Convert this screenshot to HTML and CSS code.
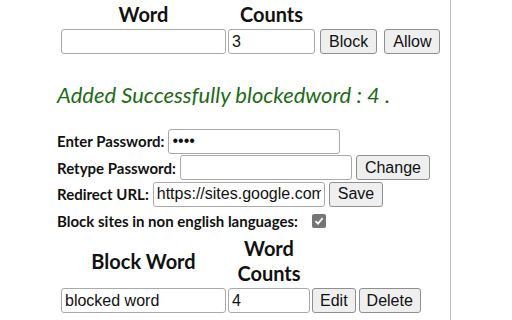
FILE: index.html
```html
<!DOCTYPE html>
<html lang="en">
  <head>
    <meta charset="UTF-8" />
    <meta name="viewport" content="width=device-width, initial-scale=1.0" />
    <title>Block Words</title>
    <link rel="stylesheet" href="styles.css">
  </head>
  <body>
    <div class="page">
      <!-- add / allow a word -->
      <table class="word-table">
        <tr>
          <th>Word</th>
          <th>Counts</th>
          <th></th>
        </tr>
        <tr>
          <td><input type="text" class="word-input" /></td>
          <td><input type="text" class="count-input" value="3" /></td>
          <td>
            <button>Block</button>
            <button>Allow</button>
          </td>
        </tr>
      </table>

      <p class="message">Added Successfully blockedword : 4 .</p>

      <div class="settings">
        <div class="row">
          <label>Enter Password:</label>
          <input type="password" class="field" value="1234" />
        </div>
        <div class="row">
          <label>Retype Password:</label>
          <input type="password" class="field" />
          <button>Change</button>
        </div>
        <div class="row">
          <label>Redirect URL:</label>
          <input type="text" class="field" value="https://sites.google.com/" />
          <button>Save</button>
        </div>
        <div class="row">
          <label>Block sites in non english languages:</label>
          <span class="check">
            <svg width="10" height="10" viewBox="0 0 10 10">
              <path d="M1.5 5.2 L4 7.6 L8.6 2.2" fill="none" stroke="#fff" stroke-width="1.8" />
            </svg>
          </span>
        </div>
      </div>

      <!-- list of blocked words -->
      <table class="list-table">
        <tr>
          <th>Block Word</th>
          <th>Word<br />Counts</th>
          <th></th>
        </tr>
        <tr>
          <td><input type="text" class="word-input" value="blocked word" /></td>
          <td><input type="text" class="count-input short" value="4" /></td>
          <td class="actions">
            <button>Edit</button><button>Delete</button>
          </td>
        </tr>
      </table>
    </div>
  </body>
</html>
```

FILE: styles.css
```css
body {
  margin: 0;
  font-family: Lato, "Open Sans", sans-serif;
  color: #111;
}

.page {
  width: 451px;
  height: 320px;
  box-sizing: border-box;
  border-right: 1px solid #bbb;
  padding-left: 57px;
  overflow: hidden;
}

input,
button {
  font-family: "Liberation Sans", Arial, sans-serif;
  font-size: 16px;
  color: #111;
}

input {
  height: 25px;
  box-sizing: border-box;
  border: 1px solid #a9a9a9;
  border-radius: 3px;
  padding: 1px 3px;
  margin: 0;
}

button {
  height: 25px;
  box-sizing: border-box;
  background: #efefef;
  border: 1px solid #8f8f8f;
  border-radius: 3px;
  padding: 0 8px;
  margin: 0;
}

table {
  border-collapse: separate;
  border-spacing: 2px;
  margin-left: 2px;
}

th {
  font-size: 20px;
  font-weight: bold;
  padding: 0;
  line-height: 25px;
}

td {
  padding: 0;
}

.word-input {
  width: 165px;
}

.count-input {
  width: 87px;
}

.count-input.short {
  width: 82px;
}

.word-table button {
  margin-left: 3px;
}

.message {
  margin: 25px 0 0 0;
  font-size: 22px;
  font-style: italic;
  color: #1d6b16;
}

.settings {
  margin-top: 20px;
}

.row {
  display: flex;
  align-items: center;
  gap: 4px;
  height: 26.5px;
  font-size: 15px;
  font-weight: bold;
}

.field {
  width: 172px;
}

.check {
  width: 14px;
  height: 14px;
  background: #767676;
  border-radius: 2px;
  display: inline-flex;
  align-items: center;
  justify-content: center;
  margin-left: 10px;
}

.actions button {
  padding: 0 7px;
}

.actions button + button {
  margin-left: 3px;
}
```
